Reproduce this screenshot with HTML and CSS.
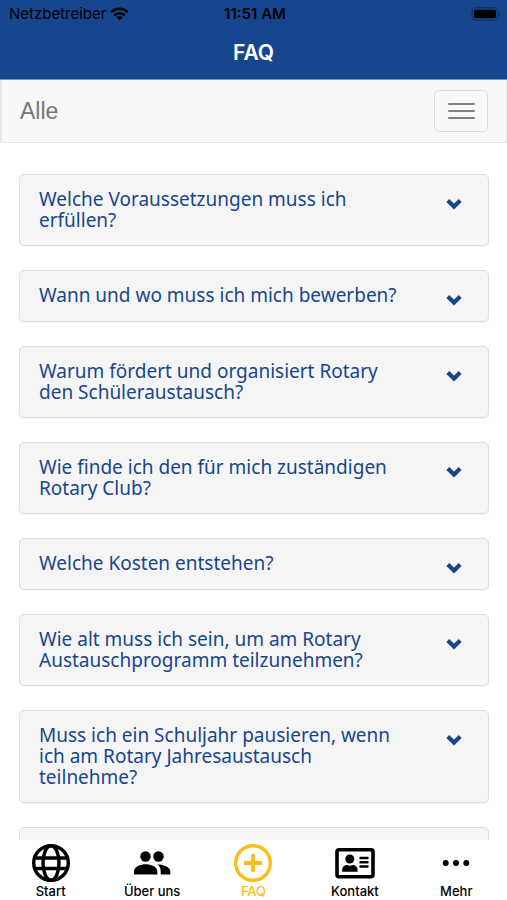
FILE: index.html
```html
<!DOCTYPE html>
<html lang="de">
<head>
<meta charset="utf-8">
<meta name="viewport" content="width=device-width, initial-scale=1">
<title>FAQ</title>
<link rel="stylesheet" href="styles.css">
</head>
<body>
<svg class="defs" aria-hidden="true">
  <symbol id="chevron" viewBox="0 0 16 12"><path d="M1.800 2.500 8 8.500l6.200-6" fill="none" stroke="currentColor" stroke-width="4.200"/></symbol>
</svg>
<header class="top">
  <div class="status">
    <div class="carrier">
      <span>Netzbetreiber</span>
      <svg width="19" height="14" viewBox="0 0 19 14" aria-hidden="true">
        <g fill="none" stroke="currentColor" stroke-width="2.600"><path d="M1.200 5.200a11.800 11.800 0 0 1 16.600 0"/><path d="M4.200 8.400a7.500 7.500 0 0 1 10.600 0"/></g>
        <path d="M9.500 13.500 6.400 10.400a4.400 4.400 0 0 1 6.200 0z" fill="currentColor"/>
      </svg>
    </div>
    <span class="clock">11:51 AM</span>
    <div class="battery">
      <svg width="30" height="14" viewBox="0 0 30 14" aria-hidden="true">
        <rect x="1" y=".7" width="26" height="12.600" rx="4" fill="none" stroke="#0f3269" stroke-width="1.300"/>
        <rect x="3" y="2.700" width="22" height="8.600" rx="2" fill="#000"/>
        <path d="M28.300 5v4c1.600-.6 1.600-3.400 0-4z" fill="#0f3269"/>
      </svg>
    </div>
  </div>
  <h1 class="title">FAQ</h1>
</header>
<nav class="filter" aria-label="Kategorie">
  <span class="filter-name">Alle</span>
  <button class="toggle" type="button" aria-label="Menü"><span class="bar"></span><span class="bar"></span><span class="bar"></span></button>
</nav>
<main class="list">
  <button class="card" type="button"><span class="question">Welche Voraussetzungen muss ich erfüllen?</span><svg class="chevron"><use href="#chevron"/></svg></button>
  <button class="card" type="button"><span class="question">Wann und wo muss ich mich bewerben?</span><svg class="chevron"><use href="#chevron"/></svg></button>
  <button class="card" type="button"><span class="question">Warum fördert und organisiert Rotary den Schüleraustausch?</span><svg class="chevron"><use href="#chevron"/></svg></button>
  <button class="card" type="button"><span class="question">Wie finde ich den für mich zuständigen Rotary Club?</span><svg class="chevron"><use href="#chevron"/></svg></button>
  <button class="card" type="button"><span class="question">Welche Kosten entstehen?</span><svg class="chevron"><use href="#chevron"/></svg></button>
  <button class="card" type="button"><span class="question">Wie alt muss ich sein, um am Rotary Austauschprogramm teilzunehmen?</span><svg class="chevron"><use href="#chevron"/></svg></button>
  <button class="card" type="button"><span class="question">Muss ich ein Schuljahr pausieren, wenn ich am Rotary Jahresaustausch teilnehme?</span><svg class="chevron"><use href="#chevron"/></svg></button>
  <div class="card"></div>
</main>
<nav class="tabs" aria-label="Navigation">
  <a class="tab" href="#start">
    <svg class="icon" viewBox="0 0 40 40" aria-hidden="true"><g fill="none" stroke="currentColor" stroke-width="3.400"><circle cx="20" cy="20" r="17.300"/><ellipse cx="20" cy="20" rx="8" ry="17.300"/><path d="M3.500 15h33M3.500 25.500h33"/></g></svg>
    <span>Start</span>
  </a>
  <a class="tab" href="#ueber-uns">
    <svg class="icon" viewBox="0 0 40 40" aria-hidden="true"><g fill="currentColor"><circle cx="13.500" cy="13.500" r="5.200"/><circle cx="26.500" cy="13.500" r="5.200"/><path d="M2 31.500V28c0-4.200 6.500-6.800 11.700-6.800S25.300 23.800 25.300 28v3.500z"/><path d="M25.500 21.300c5 .2 12.800 2.700 12.800 6.700v3.500H28.700V28c0-2.800-1.400-5-3.200-6.700z"/></g></svg>
    <span>Über uns</span>
  </a>
  <a class="tab active" href="#faq" aria-current="page">
    <svg class="icon" viewBox="0 0 40 40" aria-hidden="true"><g fill="none" stroke="currentColor" stroke-width="3.400"><circle cx="20" cy="20" r="17.300"/><path d="M20 11v18M11 20h18" stroke-width="3.800"/></g></svg>
    <span>FAQ</span>
  </a>
  <a class="tab" href="#kontakt">
    <svg class="icon" viewBox="0 0 40 40" aria-hidden="true"><rect x="2" y="6.700" width="36" height="27" rx="2" fill="none" stroke="currentColor" stroke-width="3.600"/><g fill="currentColor"><circle cx="14.800" cy="16" r="4.500"/><path d="M7.200 28.700v-2c0-2.700 2.400-4.600 5-4.600 1.600 1 3.800 1 5.400 0 2.500 0 5 1.900 5 4.600v2z"/><path d="M24.500 13.700h9v2.500h-9zM24.500 18h9v2.500h-9zM24.500 22.300h9v2.500h-9z"/></g></svg>
    <span>Kontakt</span>
  </a>
  <a class="tab" href="#mehr">
    <svg class="icon" viewBox="0 0 40 40" aria-hidden="true"><g fill="currentColor"><circle cx="9.700" cy="20" r="3"/><circle cx="20" cy="20" r="3"/><circle cx="30.300" cy="20" r="3"/></g></svg>
    <span>Mehr</span>
  </a>
</nav>
</body>
</html>
```
FILE: styles.css
```css
* {
  box-sizing: border-box;
}

body {
  margin: 0;
  height: 100vh;
  display: flex;
  flex-direction: column;
  background: #fff;
  font-family: Inter, "Liberation Sans", sans-serif;
}

.defs {
  position: absolute;
  width: 0;
  height: 0;
}

.top {
  background: #17468f;
  border-bottom: 1px solid #6f93cc;
}

.status {
  display: grid;
  grid-template-columns: 1fr auto 1fr;
  align-items: center;
  height: 27px;
  padding: 0 6px 0 9px;
  font-size: 15px;
  color: #000;
}

.carrier {
  display: flex;
  align-items: center;
  gap: 4px;
}

.clock {
  font-weight: 600;
}

.battery {
  display: flex;
  justify-content: flex-end;
}

.title {
  margin: 0;
  height: 52px;
  line-height: 52px;
  text-align: center;
  font-size: 21px;
  font-weight: 600;
  color: #fff;
}

.filter {
  display: flex;
  align-items: center;
  justify-content: space-between;
  height: 63px;
  padding: 0 18px;
  background: #f8f8f8;
  border: 1px solid #e7e7e7;
  border-top: 0;
  border-left-width: 2px;
}

.filter-name {
  font-family: "Liberation Sans", sans-serif;
  font-size: 23px;
  color: #777;
}

.toggle {
  display: flex;
  flex-direction: column;
  justify-content: center;
  align-items: center;
  gap: 5px;
  width: 54px;
  height: 42px;
  padding: 0;
  background: transparent;
  border: 1px solid #ddd;
  border-radius: 5px;
}

.bar {
  width: 27px;
  height: 2px;
  border-radius: 1px;
  background: #808080;
}

.list {
  flex: 1;
  min-height: 0;
  display: flex;
  flex-direction: column;
  gap: 24px;
  padding: 31px 18px 0 19px;
  overflow-y: auto;
  scrollbar-width: none;
}

.card {
  flex: none;
  display: flex;
  justify-content: space-between;
  align-items: flex-start;
  min-height: 52px;
  padding: 14px 26px 14px 19px;
  background: #f5f5f5;
  border: 1px solid #ddd;
  border-radius: 5px;
  box-shadow: 0 1px 1px rgba(0, 0, 0, 0.05);
  font-family: "Noto Sans", sans-serif;
  font-size: 19px;
  line-height: 21px;
  text-align: left;
  color: #17468f;
}

.question {
  max-width: 370px;
}

.chevron {
  flex: none;
  width: 16px;
  height: 12px;
  margin-top: 9px;
}

.tabs {
  flex: none;
  display: grid;
  grid-template-columns: repeat(5, 1fr);
  height: 60px;
  background: #fff;
}

.tab {
  display: flex;
  flex-direction: column;
  align-items: center;
  padding-top: 3px;
  font-size: 13px;
  font-weight: 500;
  line-height: 16px;
  color: #000;
  text-decoration: none;
}

.tab.active {
  color: #fcbe16;
}

.icon {
  width: 40px;
  height: 40px;
}
```
